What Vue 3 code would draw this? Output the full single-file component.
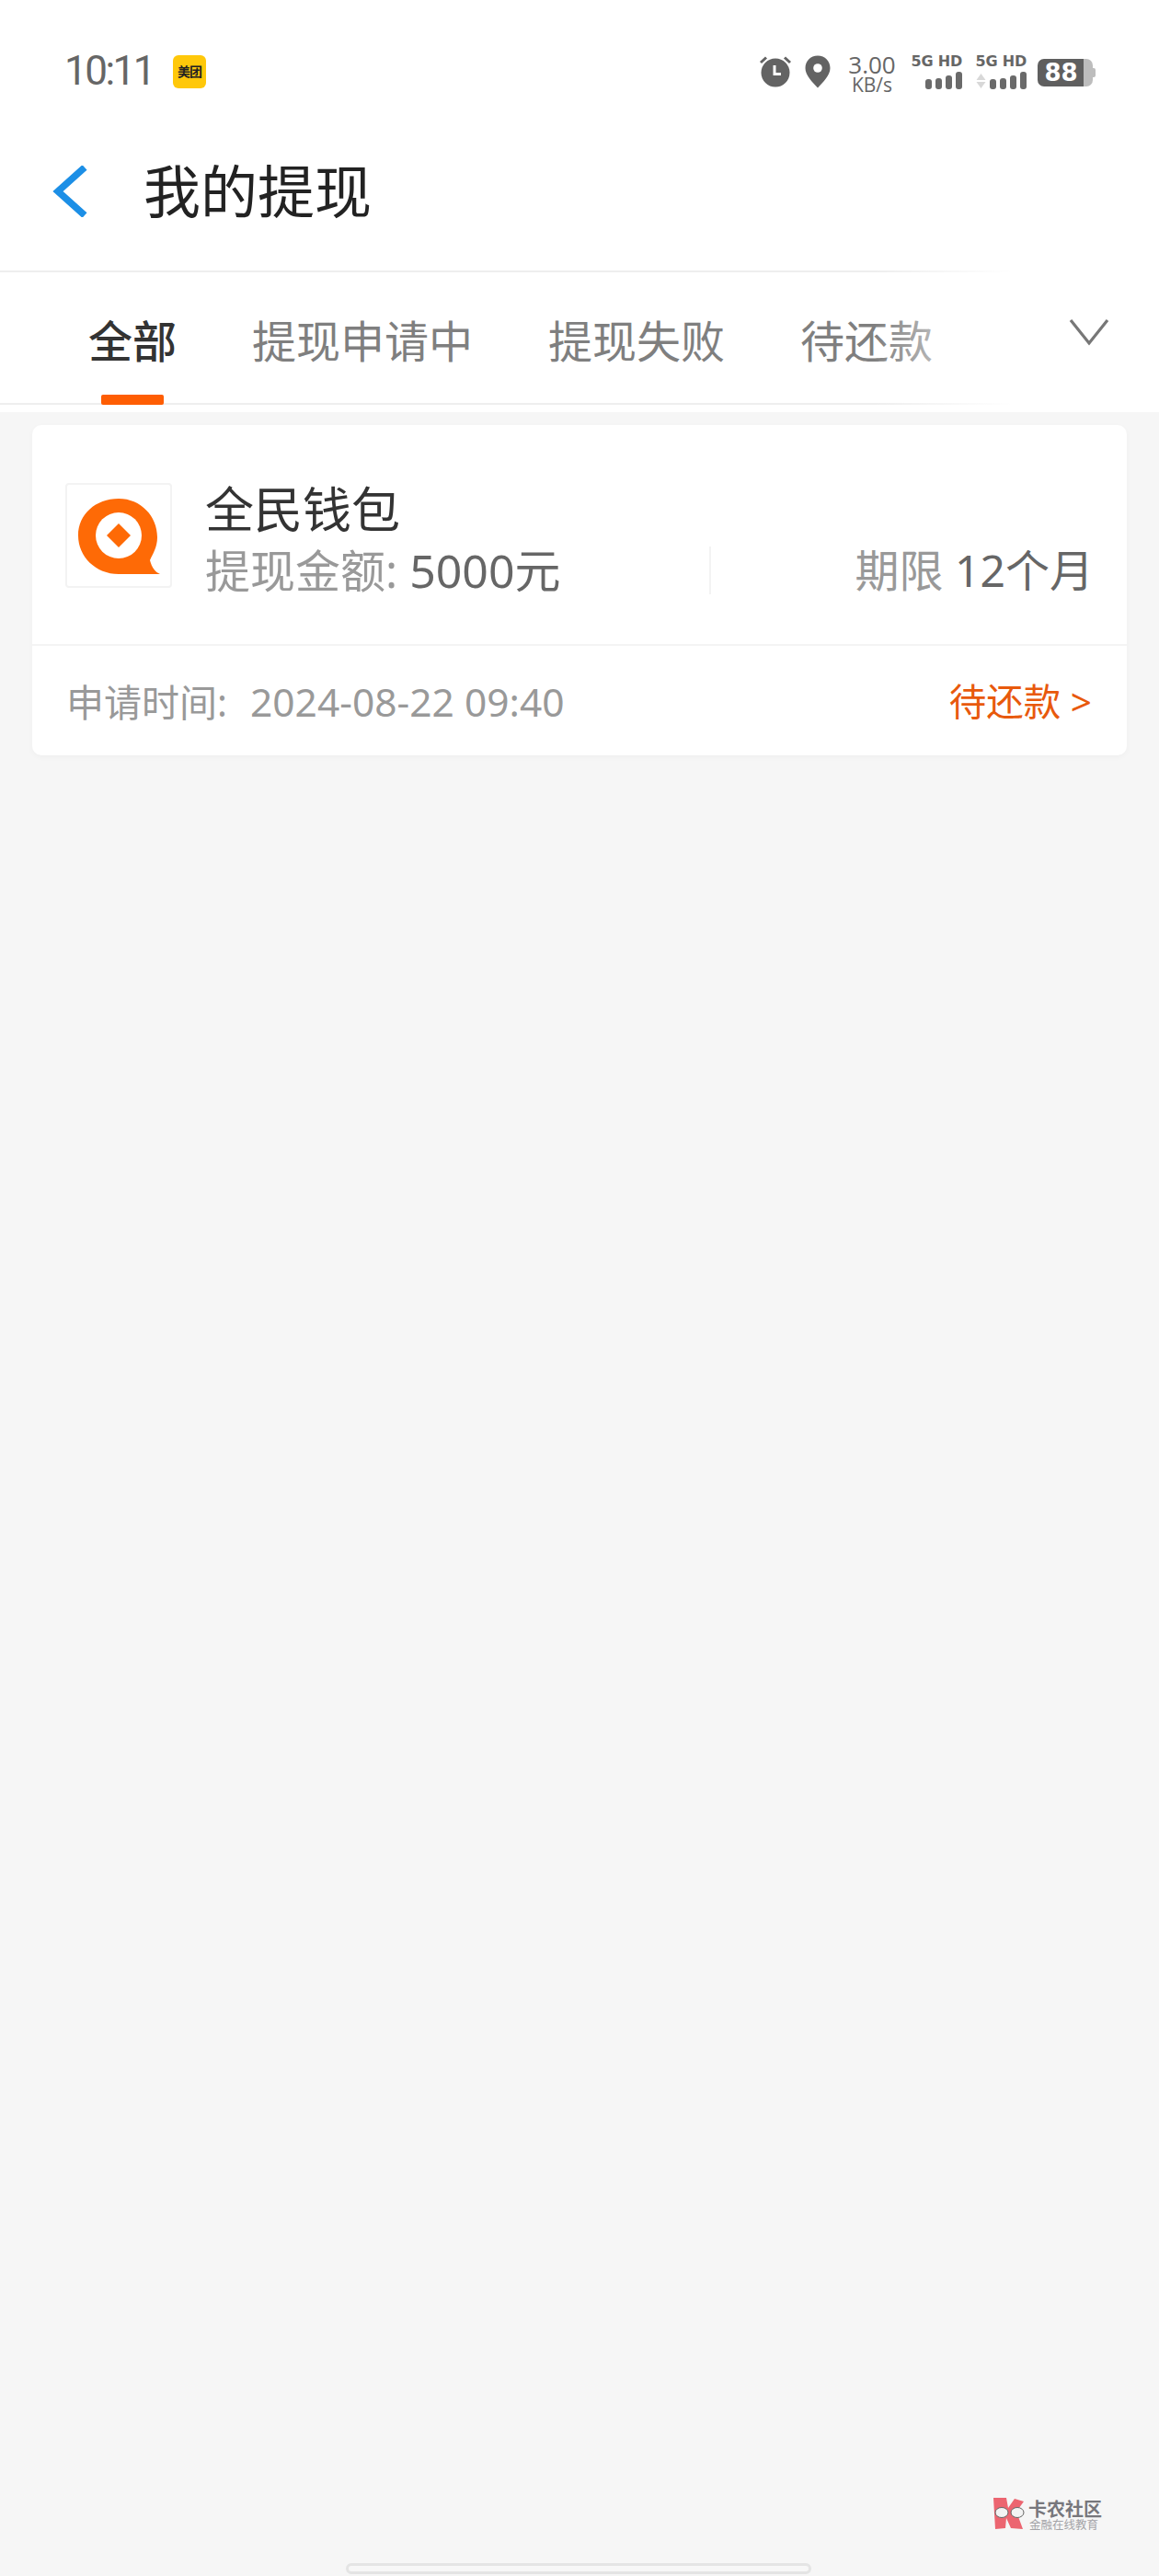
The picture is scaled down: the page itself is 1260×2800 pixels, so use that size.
<script setup>
import { ref } from 'vue'

const tabs = ref(['全部', '提现申请中', '提现失败', '待还款'])
const activeTab = ref(0)
const signalBars = [11, 12, 15, 19]
</script>

<template>
  <div class="page">
    <div class="status-bar">
      <div class="status-left">
        <span class="clock">10:11</span>
        <span class="app-badge">美团</span>
      </div>
      <div class="status-right">
        <svg class="ic-alarm" width="36" height="35" viewBox="0 0 36 35">
          <circle cx="18" cy="19" r="15.5" fill="#636363" />
          <path d="M2 8 L8 2.5 M34 8 L28 2.5" stroke="#636363" stroke-width="3" />
          <path d="M17 11 V20.5 H24" stroke="#fff" stroke-width="3" fill="none" />
        </svg>
        <svg class="ic-pin" width="28" height="36" viewBox="0 0 28 36">
          <path d="M14 0.5 C6 0.5 0.5 6.5 0.5 14 C0.5 22 8 29 14 35.5 C20 29 27.5 22 27.5 14 C27.5 6.5 22 0.5 14 0.5 Z" fill="#636363" />
          <circle cx="14" cy="14" r="4.8" fill="#fff" />
        </svg>
        <div class="speed">
          <span class="speed-num">3.00</span>
          <span class="speed-unit">KB/s</span>
        </div>
        <div class="sim">
          <span class="sim-label">5G HD</span>
          <div class="bars">
            <i v-for="(h, i) in signalBars" :key="i" :style="{ height: h + 'px' }"></i>
          </div>
        </div>
        <div class="sim">
          <span class="sim-label">5G HD</span>
          <div class="bars">
            <svg class="arrows" width="11" height="18" viewBox="0 0 11 18">
              <path d="M5.5 1 L10.5 8 H0.5 Z M5.5 17 L10.5 10 H0.5 Z" fill="#d8d8d8" />
            </svg>
            <i v-for="(h, i) in signalBars" :key="i" :style="{ height: h + 'px' }"></i>
          </div>
        </div>
        <div class="battery">
          <span>88</span>
          <i class="battery-tip"></i>
        </div>
      </div>
    </div>

    <header class="header">
      <svg class="back" width="38" height="56" viewBox="0 0 38 56">
        <path d="M35 2 L6 28 L35 54" fill="none" stroke="#1c8fe6" stroke-width="7.5" />
      </svg>
      <h1>我的提现</h1>
    </header>

    <div class="tabs-wrap">
      <nav class="tabs">
        <div
          v-for="(tab, i) in tabs"
          :key="tab"
          class="tab"
          :class="{ active: activeTab === i }"
          @click="activeTab = i"
        >
          {{ tab }}
        </div>
        <div class="tabs-fade"></div>
        <svg class="tabs-more" width="44" height="30" viewBox="0 0 44 30">
          <path d="M2 2 L22 27 L42 2" fill="none" stroke="#777" stroke-width="3.2" />
        </svg>
      </nav>
    </div>

    <section class="card">
      <div class="card-main">
        <div class="logo-box">
          <svg width="112" height="110" viewBox="0 0 112 110">
            <path d="M101 97 H56 C31 97 12 78 12 55 C12 32 31 15 56 15 C80 15 98 34 98 57 C98 68 93 75 90 82 C92 90 96 95 101 97 Z" fill="#fe6a06" />
            <circle cx="56" cy="55" r="25" fill="#fff" />
            <path d="M56 42 L69 55 L56 68 L43 55 Z" fill="#fe6a06" />
          </svg>
        </div>
        <div class="info">
          <div class="name">全民钱包</div>
          <div class="meta">
            <div class="amount"><span class="label">提现金额:</span> 5000元</div>
            <div class="term"><span class="label">期限</span> 12个月</div>
          </div>
        </div>
      </div>
      <div class="card-footer">
        <div class="apply-time">申请时间:<span class="time-val">2024-08-22 09:40</span></div>
        <div class="state">待还款 &gt;</div>
      </div>
    </section>

    <div class="watermark">
      <svg width="36" height="36" viewBox="0 0 36 36">
        <path d="M1 1 H15 L17 12 L24 2 L34 5 L26 16 L33 35 L20 34 L15 23 L14 34 L3 35 Z" fill="#ec6570" />
        <ellipse cx="10" cy="17" rx="7" ry="5.5" fill="#f3f3f3" stroke="#666" stroke-width="1" />
        <ellipse cx="27" cy="17" rx="7" ry="5.5" fill="#f3f3f3" stroke="#666" stroke-width="1" />
      </svg>
      <div class="wm-text">
        <span class="wm-title">卡农社区</span>
        <span class="wm-sub">金融在线教育</span>
      </div>
    </div>

    <div class="home-bar"></div>
  </div>
</template>

<style scoped>
.page {
  position: relative;
  height: 2800px;
  overflow: hidden;
  background: #f6f6f6;
  font-family: "Noto Sans", "Noto Sans CJK SC", sans-serif;
}

.status-bar {
  height: 130px;
  box-sizing: border-box;
  padding: 58px 72px 0 70px;
  display: flex;
  justify-content: space-between;
  align-items: flex-start;
  background: #fff;
}

.status-left {
  display: flex;
  align-items: center;
  gap: 21px;
  height: 38px;
}

.clock {
  font-family: Roboto, sans-serif;
  font-size: 44px;
  line-height: 38px;
  letter-spacing: -2.5px;
  color: #666;
}

.app-badge {
  width: 36px;
  height: 36px;
  margin-top: 2px;
  border-radius: 6px;
  background: #ffc80a;
  color: #222;
  font-size: 14px;
  font-weight: 700;
  line-height: 36px;
  text-align: center;
  white-space: nowrap;
  letter-spacing: -1px;
}

.status-right {
  display: flex;
  align-items: flex-start;
}

.ic-alarm {
  margin-top: 2px;
}

.ic-pin {
  margin-left: 14px;
  margin-top: 2px;
}

.speed {
  margin-left: 17px;
  width: 56px;
  display: flex;
  flex-direction: column;
  align-items: center;
  color: #666;
  font-family: "Open Sans", sans-serif;
}

.speed-num {
  font-size: 26px;
  line-height: 25px;
}

.speed-unit {
  font-size: 21px;
  line-height: 19px;
}

.sim {
  margin-left: 12px;
  width: 58px;
  display: flex;
  flex-direction: column;
  align-items: flex-end;
  margin-top: -1px;
}

.sim-label {
  font-family: "DejaVu Sans", sans-serif;
  font-size: 16px;
  line-height: 19px;
  font-weight: 700;
  color: #666;
  white-space: nowrap;
  letter-spacing: -0.2px;
}

.bars {
  margin-top: 2px;
  height: 19px;
  display: flex;
  align-items: flex-end;
  gap: 4px;
}

.bars i {
  width: 7px;
  border-radius: 3px;
  background: #6a6a6a;
}

.battery {
  position: relative;
  margin-left: 12px;
  margin-top: 6px;
  width: 60px;
  height: 30px;
  padding-right: 9px;
  border-radius: 7px;
  background: linear-gradient(to right, #5f5f5f 84%, #bdbdbd 84%);
  box-sizing: border-box;
  color: #fff;
  font-family: "DejaVu Sans", sans-serif;
  font-size: 26px;
  font-weight: 700;
  line-height: 30px;
  text-align: center;
}

.battery-tip {
  position: absolute;
  right: -3px;
  top: 10px;
  width: 3px;
  height: 10px;
  border-radius: 0 2px 2px 0;
  background: #bdbdbd;
}

.header {
  height: 166px;
  box-sizing: border-box;
  padding: 0 0 8px 57px;
  display: flex;
  align-items: center;
  gap: 61px;
  background: #fff;
  border-bottom: 2px solid #eee;
}

.header h1 {
  margin: 0;
  font-size: 62px;
  font-weight: 400;
  color: #222;
  line-height: 1;
}

.tabs-wrap {
  padding-bottom: 8px;
  background: #fff;
}

.tabs {
  position: relative;
  height: 144px;
  box-sizing: border-box;
  padding: 8px 0 0 55px;
  display: flex;
  align-items: center;
  background: #fff;
  border-bottom: 2px solid #eee;
}

.tab {
  position: relative;
  padding: 0 41px;
  font-size: 48px;
  line-height: 60px;
  color: #7f7f7f;
  white-space: nowrap;
}

.tab.active {
  color: #333;
  font-weight: 500;
}

.tab.active::after {
  content: '';
  position: absolute;
  left: 50%;
  bottom: -39px;
  width: 68px;
  height: 11px;
  margin-left: -34px;
  border-radius: 2px;
  background: #fe5d03;
}

.tabs-fade {
  position: absolute;
  top: -3px;
  bottom: -2px;
  left: 950px;
  right: 0;
  background: linear-gradient(to right, rgba(255, 255, 255, 0), #fff 150px);
}

.tabs-more {
  position: absolute;
  right: 54px;
  top: 50px;
}

.card {
  margin: 14px 35px 0 35px;
  background: #fff;
  border-radius: 10px;
  box-shadow: 0 2px 6px rgba(0, 0, 0, 0.03);
}

.card-main {
  height: 240px;
  box-sizing: border-box;
  padding: 63px 38px 0 36px;
  display: flex;
  gap: 36px;
  border-bottom: 2px solid #f4f4f4;
}

.logo-box {
  width: 116px;
  height: 114px;
  flex: none;
  box-sizing: border-box;
  border: 2px solid #f3f3f3;
  border-radius: 4px;
}

.logo-box svg {
  display: block;
}

.info {
  flex: 1;
  min-width: 0;
}

.name {
  font-size: 53px;
  line-height: 58px;
  color: #333;
}

.meta {
  margin-top: 11px;
  display: flex;
  justify-content: space-between;
  align-items: center;
  font-size: 50px;
  line-height: 52px;
  color: #666;
}

.label {
  font-size: 49px;
  color: #999;
}

.amount {
  flex: none;
  width: 548px;
  border-right: 2px solid #f3f3f3;
  white-space: nowrap;
}

.term {
  font-size: 48px;
  white-space: nowrap;
  margin-right: -2px;
}

.term .label {
  font-size: 48px;
}

.card-footer {
  height: 119px;
  box-sizing: border-box;
  padding: 0 38px 2px 37px;
  display: flex;
  justify-content: space-between;
  align-items: center;
  font-size: 41px;
}

.apply-time {
  color: #999;
  white-space: nowrap;
}

.time-val {
  margin-left: 25px;
  font-size: 42.5px;
}

.state {
  font-size: 40.5px;
  color: #e8590c;
  white-space: nowrap;
}

.watermark {
  position: absolute;
  left: 1079px;
  top: 2712px;
  display: flex;
  gap: 3px;
  align-items: center;
}

.wm-text {
  display: flex;
  flex-direction: column;
  align-items: flex-start;
  padding-top: 5px;
}

.wm-title {
  font-size: 20px;
  line-height: 21px;
  font-weight: 700;
  color: #77777c;
  white-space: nowrap;
}

.wm-sub {
  font-size: 12.5px;
  line-height: 14px;
  color: #a4a4a8;
  white-space: nowrap;
  padding-left: 1px;
}

.home-bar {
  position: absolute;
  left: 376px;
  top: 2786px;
  width: 506px;
  height: 12px;
  box-sizing: border-box;
  border: 3px solid #e4e4e4;
  border-radius: 6px;
  background: #f7f7f7;
}
</style>

<style>
body {
  background: #f6f6f6;
}
</style>
